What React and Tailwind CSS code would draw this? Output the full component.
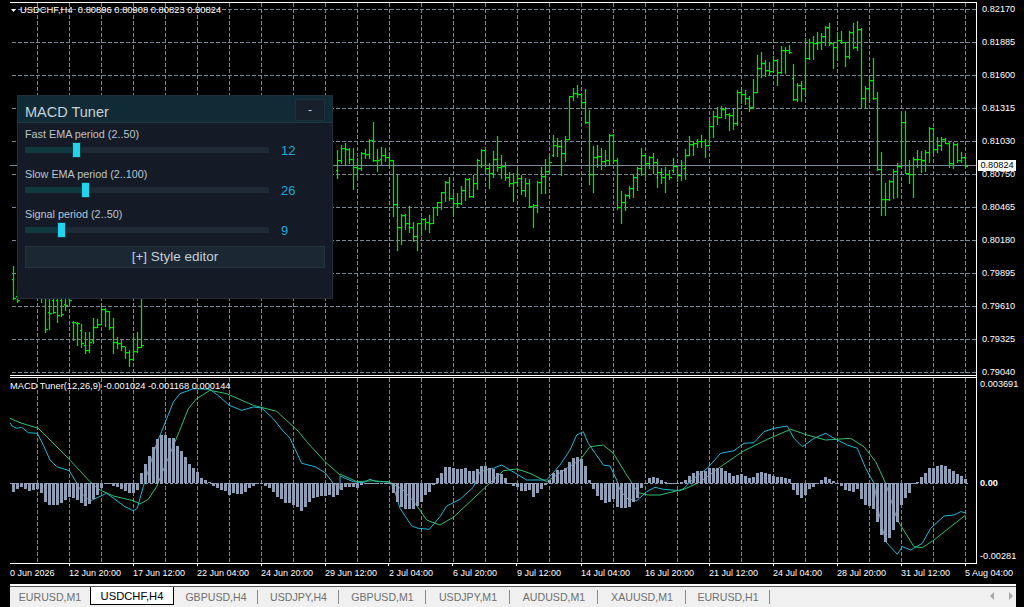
import React from "react";

const z3 = (ox, oy, a) => {
  const out = [];
  for (let i = 0; i < a.length; i += 2) out.push(`${(ox + a[i] / 3).toFixed(1)},${(oy + a[i + 1] / 3).toFixed(1)}`);
  return out;
};

const cyan = [
  ...z3(0, 400, [30,68,36,78,50,85,65,82,85,98,112,100,130,135,150,180,170,200,208,212,225,240,250,285,270,303,320,280,375,320,400,332,412,325,430,260,470,130]),
  ...z3(130, 372, [95,178,130,90,150,65,190,50,240,52,270,75,298,100,335,115,370,105,395,108,430,140,460,178]),
  ...z3(0, 400, [870,115,905,190,945,200,975,218,1000,250,1020,265]),
  ...z3(340, 400, [0,228,40,245,70,248,90,238,110,245,145,245,160,260,180,325,215,378,235,385,268,388,300,350,320,318,360,298,400,262,420,215,460,205,485,195,510,210,560,240,620,240,660,195,690,150,710,105,730,95,745,130,790,195,810,198,830,240,840,270,860,295,890,302,920,275,945,262,970,268,1020,272]),
  ...z3(684, 400, [0,265,30,235,70,205,110,160,150,152,180,130,210,128,240,95,270,85,310,78,330,115,355,140,390,115,425,100,450,115,490,135,520,145,545,205,570,250,585,340,605,425,640,463,655,440,680,450,715,430,740,385,780,348,810,345,830,335,845,338]),
].join(" ");

const green = [
  ...z3(0, 400, [30,55,60,68,115,85,150,120,205,175,270,245,300,270,340,288,400,302,420,312,445,298,470,260,490,210,527,120]),
  ...z3(130, 372, [148,178,175,110,200,80,240,55,290,65,370,100,440,118,505,178]),
  ...z3(0, 400, [920,125,975,185,1020,225]),
  ...z3(340, 400, [0,222,50,245,100,242,150,247,190,270,225,310,260,360,300,375,340,352,390,305,440,258,490,212,530,207,570,220,620,245,680,205,720,180,750,140,790,135,820,160,860,225,895,278,925,285,960,285,1020,270]),
  ...z3(684, 400, [0,268,50,245,110,200,175,155,250,118,320,88,370,105,425,120,500,115,540,140,575,185,605,250,640,360,690,440,715,443,750,420,800,380,845,345]),
].join(" ");

// histogram: zoomed end value for each bar from x=13 step 4
const histZ = [
  275,268,262,267,272,270,267,280,305,315,315,315,310,300,292,295,300,310,318,312,298,285,265,252,250,258,262,268,272,278,278,270,220,192,168,142,118,106,106,114,114,138,152,172,192,205,215,235,240,247,258,265,270,273,285,278,282,282,276,265,258,252,248,258,265,275,290,298,308,310,315,322,332,322,305,295,290,288,288,285,290,285,
  270,262,262,262,265,255,250,250,248,248,250,250,250,280,305,320,326,326,326,318,305,285,276,255,235,218,202,202,205,208,208,205,212,212,208,197,198,205,208,218,222,235,250,258,262,272,272,270,290,280,268,255,240,220,210,210,205,185,175,170,178,198,240,268,288,300,310,305,298,322,325,325,322,305,295,265,252,235,230,235,240,245,250,250,250,
  245,
  240,228,218,214,214,214,205,204,204,205,212,218,228,224,222,228,234,230,218,216,218,222,228,230,230,233,238,270,285,295,285,268,262,250,240,232,238,244,252,258,270,272,275,268,298,315,318,326,365,405,425,413,390,365,315,295,278,250,246,232,218,205,204,198,196,198,208,214,222,228,238,
];

const low = [
  [13,266,299,279,298],[17,290,302,296,300],[41,290,302,296,296],[45,290,332,296,329],[49,290,329,312,313],[53,290,313,300,312],[57,290,322,300,315],[61,290,316,300,314],[65,290,310,304,305],[69,290,303,298,300],
  [73,321,340,322,322],[77,322,345,323,323],[81,324,347,330,343],[85,332,353,345,350],[89,332,352,350,342],[93,318,343,340,327],[97,319,327,327,324],[101,307,323,324,309],[105,308,326,309,311],[109,311,329,311,327],[113,318,353,327,342],[117,337,348,342,343],[121,340,350,343,346],[125,347,358,346,352],[129,350,366,352,359],[133,337,360,359,351],[137,332,352,351,347],[141,290,347,347,345],[337,150,178,170,160],
];
const mid = `195,248,240,205 190,255,205,208 205,248,208,238 205,327,238,262 235,295,262,265 215,270,265,218 208,235,218,222 178,235,222,180 126,243,180,240 208,273,240,240 200,252,238,226 205,243,226,232 217,260,232,240 240,408,240,372 284,510,372,440 402,492,440,405 402,447,405,428 378,456,428,440 425,484,440,467 428,510,467,430 415,465,430,418 415,447,418,425 405,456,425,428 382,428,428,382 365,405,382,365 335,388,365,337 303,362,337,306 292,360,306,355 340,403,355,370 338,382,370,368 318,372,368,330 295,360,330,297 293,350,297,347 285,352,347,310 238,327,310,240 208,260,255,210 210,280,210,265 250,323,265,278 213,290,278,238 168,272,238,262 225,295,260,258 245,300,258,290 275,318,290,310 280,362,310,305 265,318,305,295 285,342,295,330 295,348,330,308 298,380,308,378 372,440,378,375 303,395,375,305 262,338,305,288 238,338,288,272 232,282,272,247 165,228,225,195 175,228,195,197 180,285,197,220 168,243,220,178 48,178,178,48 25,60,48,40 15,52,40,42 42,85,42,65 27,128,65,127 90,312,127,282 198,335,282,230 195,262,230,228 205,268,228,243 210,258,243,240 162,255,240,165 162,250,165,240 235,388,240,382 333,428,382,365 343,390,365,345 318,353,345,325 282,352,325,292 260,330,292,265 205,285,265,226 218,288,226,248 228,265,248,232 220,280,232,245 238,322,245,275 265,310,275,290 262,335,290,282 270,297,282,290 235,275,270,258 258,303,258,285`
  .split(" ").map((s, i) => { const [h, l, o, c] = s.split(",").map(Number); return [341 + 4 * i, 80 + h / 3, 80 + l / 3, 80 + o / 3, 80 + c / 3]; });
const high = `448,538,505,465 408,465,465,432 422,465,432,430 418,440,430,422 405,440,422,422 418,470,422,435 362,435,435,377 333,410,377,347 322,372,347,350 318,352,350,328 322,355,328,342 340,390,342,345 328,388,345,370 270,375,370,275 268,310,275,283 270,312,283,295 288,332,295,320 238,325,320,275 165,275,275,205 155,230,205,190 180,228,190,210 185,225,210,212 168,212,212,180 178,255,180,215 138,218,215,150 142,218,150,150 135,158,150,155 192,300,235,297 250,303,297,255 243,302,255,265 115,285,265,175 118,178,173,125 108,178,125,128 97,147,128,125 100,148,125,108 78,135,108,80 70,135,80,128 125,205,128,140 95,180,140,120 93,130,120,125 125,198,125,168 92,175,168,95 70,145,95,140 63,150,140,88 85,325,88,295 258,325,295,265 232,300,265,240 175,298,240,295 275,510,295,508 455,645,508,598 550,645,598,598 540,600,598,542 508,595,542,512 490,590,512,497 335,500,497,367 333,520,367,520 480,550,520,522 472,592,522,478 450,500,478,478 452,515,478,480 450,512,480,455 382,485,455,385 385,455,385,448 412,455,448,435 412,450,435,418 415,430,418,428 425,502,428,490 425,505,490,432 430,485,432,480 455,485,480,472 470,498,472,497`
  .split(" ").map((s, i) => { const [h, l, o, c] = s.split(",").map(Number); return [685 + 4 * i, h / 3, l / 3, o / 3, c / 3]; });

const bars = [...low, ...mid, [681, 160, 180, 175, 165], ...high];
const barPath = bars.map(([x, h, l, o, c]) => {
  const [H, L, O, C] = [h, l, o, c].map((v) => Math.round(v));
  return `M${x + 0.5} ${H}V${L + 1}M${x - 1} ${O + 0.5}H${x}M${x + 1} ${C + 0.5}H${x + 3}`;
}).join("");

const vx = Array.from({ length: 30 }, (_, i) => 37 + 32 * i);
const hy = Array.from({ length: 12 }, (_, i) => 9 + 33 * i);
const prices = ["0.82170","0.81885","0.81600","0.81315","0.81030","0.80750","0.80465","0.80180","0.79895","0.79610","0.79325","0.79040"];
const times = ["12 Jun 20:00","17 Jun 12:00","22 Jun 04:00","24 Jun 20:00","29 Jun 12:00","2 Jul 04:00","6 Jul 20:00","9 Jul 12:00","14 Jul 04:00","16 Jul 20:00","21 Jul 12:00","24 Jul 04:00","28 Jul 20:00","31 Jul 12:00","5 Aug 04:00"];

function Chart() {
  return (
    <svg className="block shrink-0" width="967" height="566" viewBox="10 0 967 566">
      <g stroke="#778899" strokeWidth="1" strokeDasharray="4 2" shapeRendering="crispEdges">
        {hy.map((y) => <path key={y} d={`M12 ${y + 0.5}H976`} />)}
        {vx.map((x) => <path key={x} d={`M${x + 0.5} 3V375M${x + 0.5} 378V563`} />)}
      </g>
      <path d="M10 165.5H976" stroke="#778899" shapeRendering="crispEdges" />
      <path d={barPath} stroke="#00e400" strokeWidth="1.25" fill="none" />
      <polyline points={cyan} fill="none" stroke="#1fb8d8" strokeWidth="1" />
      <polyline points={green} fill="none" stroke="#30c070" strokeWidth="1" />
      <path d="M10 483.5H970" stroke="#8fa0b6" strokeDasharray="3 2" shapeRendering="crispEdges" />
      <g fill="#8fa0b6" shapeRendering="crispEdges">
        {histZ.map((v, i) => {
          const y = 400 + v / 3;
          const top = Math.round(Math.min(y, 483));
          const bot = Math.round(Math.max(y, 483));
          return <rect key={i} x={12 + 4 * i} y={top} width="3" height={Math.max(bot - top, 1)} />;
        })}
      </g>
      <g stroke="#ffffff" fill="none" shapeRendering="crispEdges">
        <path d="M10 2.5H977M10 375.5H977M10 377.5H977M976.5 2V564M10 563.5H977" />
        {[69,133,197,261,325,388,452,516,581,645,709,773,837,901,965].map((x) => <path key={x} d={`M${x + 0.5} 564V566`} />)}
      </g>
      <path d="M11 9H16L13.5 12Z" fill="#ffffff" />
    </svg>
  );
}

function Axis() {
  return (
    <div className="relative w-[47px] shrink-0 pl-[5px] pt-[3px] text-white text-[9.2px] leading-[12px]">
      <div className="flex flex-col gap-[21px]">
        {prices.map((p) => <div key={p} className="h-[12px]">{p}</div>)}
      </div>
      <div className="h-[12px] -ml-[2px]">0.003691</div>
      <div className="h-[12px] mt-[87px] -ml-[2px] font-bold">0.00</div>
      <div className="h-[12px] mt-[61px] -ml-[2px]">-0.00281</div>
      <div className="absolute left-[1px] top-[160px] w-[38px] h-[11px] bg-white text-black text-center leading-[11px]">0.80824</div>
    </div>
  );
}

function Slider({ label, value, pct }) {
  return (
    <div className="mb-[9px]">
      <div className="h-[16px] leading-[16px] text-[10.8px] text-[#b9c5cd]">{label}</div>
      <div className="flex items-center h-[15px]">
        <div className="relative w-[244px] h-[6px] bg-[#1d2935]">
          <div className="h-full bg-[#123840]" style={{ width: `${pct}px` }} />
          <div className="absolute top-[-5px] w-[9px] h-[16px] bg-[#22d3ee] border border-[#123840]" style={{ left: `${pct - 4}px` }} />
        </div>
        <div className="ml-[12px] mt-[3px] text-[13px] leading-[16px] text-[#22a8d6]">{value}</div>
      </div>
    </div>
  );
}

function Panel() {
  return (
    <div className="absolute left-[17px] top-[95px] w-[316px] h-[204px] bg-[#141b27] border border-[#1f303c] text-[#c5d0d8]">
      <div className="flex items-center justify-between h-[27px] pl-[7px] pr-[7px] bg-[#112b36] border-b border-[#1c3a45]">
        <div className="text-[14.5px] leading-[20px] mt-[5px] text-[#c5d2d9]">MACD Tuner</div>
        <div className="w-[30px] h-[22px] flex items-center justify-center bg-[#17212c] border border-[#1d303c] text-[12px] mt-[1px]">-</div>
      </div>
      <div className="px-[7px] pt-[3px]">
        <Slider label="Fast EMA period (2..50)" value="12" pct={51} />
        <Slider label="Slow EMA period (2..100)" value="26" pct={60} />
        <Slider label="Signal period (2..50)" value="9" pct={36} />
        <div className="mt-[1px] w-[300px] h-[22px] flex items-center justify-center bg-[#1b2733] border border-[#243340] text-[13.5px] text-[#c5d0d8]">[+] Style editor</div>
      </div>
    </div>
  );
}

const tabs = [
  ["EURUSD,M1", 80, false, false],
  ["USDCHF,H4", 84, true, false],
  ["GBPUSD,H4", 84, false, true],
  ["USDJPY,H4", 81, false, true],
  ["GBPUSD,M1", 87, false, true],
  ["USDJPY,M1", 84, false, true],
  ["AUDUSD,M1", 88, false, true],
  ["XAUUSD,M1", 88, false, true],
  ["EURUSD,H1", 84, false, true],
];

function Tabs() {
  return (
    <div className="ml-[10px] w-[1006px] h-[23px] border-t-2 border-white bg-[#f0f0f0] shadow-[inset_0_1px_0_#555]">
      <div className="flex items-start h-full pt-[1px]">
        {tabs.map(([t, w, active, sep]) => (
          <div key={t} className={active
            ? "flex items-center justify-center h-[18px] bg-white border border-t-0 border-black text-black text-[11.2px] leading-[14px]"
            : "relative flex items-center justify-center h-[18px] mt-[1px] text-[#6f6f6f] text-[10.6px] leading-[14px]"}
            style={{ width: `${w}px` }}>
            {t}
            {sep && <span className="absolute right-0 top-[2px] w-px h-[14px] bg-[#8a8a8a]" />}
          </div>
        ))}
        <div className="ml-auto flex items-center gap-[13px] pr-[2px] mt-[5px]">
          <svg width="6" height="8" viewBox="0 0 6 8"><path d="M5 0V8L1 4Z" fill="#a8a8a8" /></svg>
          <svg width="6" height="8" viewBox="0 0 6 8"><path d="M1 0V8L5 4Z" fill="#a8a8a8" /></svg>
        </div>
      </div>
    </div>
  );
}

export default function App() {
  return (
    <div className="relative w-[1024px] h-[607px] overflow-hidden bg-black font-['Liberation_Sans',sans-serif]">
      <div className="flex pl-[10px] h-[566px]">
        <Chart />
        <Axis />
      </div>
      <div className="flex pl-[10px] h-[18px] text-white text-[9px] leading-[12px] pt-[1px] whitespace-nowrap">
        <div className="w-[59px] shrink-0">0 Jun 2026</div>
        {times.map((t) => <div key={t} className="w-[64px] shrink-0">{t}</div>)}
      </div>
      <Tabs />
      <div className="absolute left-[20px] top-[4px] text-white text-[9.4px] leading-[12px] whitespace-pre">USDCHF,H4  0.80896 0.80908 0.80823 0.80824</div>
      <div className="absolute left-[10px] top-[380px] text-white text-[9.3px] leading-[12px] whitespace-pre">MACD Tuner(12,26,9) -0.001024 -0.001168 0.000144</div>
      <Panel />
    </div>
  );
}
